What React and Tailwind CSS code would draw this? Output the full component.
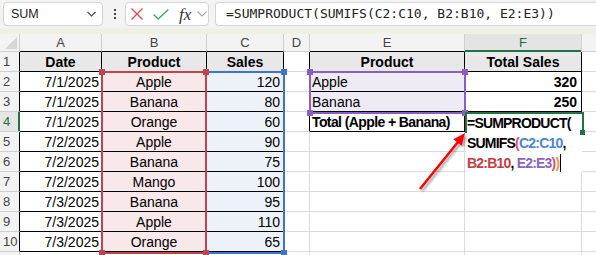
import React from 'react';

const data = [
  ['7/1/2025', 'Apple', 120],
  ['7/1/2025', 'Banana', 80],
  ['7/1/2025', 'Orange', 60],
  ['7/2/2025', 'Apple', 90],
  ['7/2/2025', 'Banana', 75],
  ['7/2/2025', 'Mango', 100],
  ['7/3/2025', 'Banana', 95],
  ['7/3/2025', 'Apple', 110],
  ['7/3/2025', 'Orange', 65],
];

const GRAY = 'border-[#dadada]';

function Cell({ className = '', children }) {
  return (
    <div className={`flex items-center overflow-hidden whitespace-nowrap border-r border-b text-[14px] text-black pt-[2px] ${className}`}>
      {children}
    </div>
  );
}

function FormulaBar() {
  return (
    <div>
      <div className="h-[28px] bg-[#f3f3f3] flex items-start pt-[2px]">
        <div className="ml-[3px] w-[100px] h-[24px] rounded-[4px] border border-[#d4d4d4] bg-white flex items-center justify-between pl-[7px] pr-[6px]">
          <span className="text-[12.5px] text-[#222]">SUM</span>
          <svg width="9" height="6" viewBox="0 0 9 6">
            <polyline points="0.5,0.8 4.5,4.8 8.5,0.8" fill="none" stroke="#444" strokeWidth="1.2" />
          </svg>
        </div>
        <div className="ml-[10px] w-[3px] h-[24px] flex flex-col items-center justify-center gap-[2px]">
          <span className="w-[2px] h-[2px] bg-[#444]" />
          <span className="w-[2px] h-[2px] bg-[#444]" />
          <span className="w-[2px] h-[2px] bg-[#444]" />
        </div>
        <div className="ml-[9px] w-[84px] h-[24px] rounded-[4px] border border-[#d4d4d4] bg-white flex items-center">
          <svg className="ml-[5px]" width="12" height="12" viewBox="0 0 12 12">
            <path d="M0.5 0.5L11.5 11.5M11.5 0.5L0.5 11.5" stroke="#e2474a" strokeWidth="1.3" />
          </svg>
          <svg className="ml-[10px]" width="16" height="11" viewBox="0 0 16 11">
            <polyline points="0.6,5.4 5.2,10 15.4,0.6" fill="none" stroke="#46a862" strokeWidth="1.4" />
          </svg>
          <span className="ml-[10px] font-['Liberation_Serif',serif] italic text-[17px] leading-none text-[#333]">fx</span>
          <svg className="ml-[6px]" width="10" height="6" viewBox="0 0 10 6">
            <polyline points="0.5,0.6 5,5 9.5,0.6" fill="none" stroke="#a0a0a0" strokeWidth="1.1" />
          </svg>
        </div>
        <div className="ml-[6px] flex-1 h-[24px] rounded-l-[4px] border border-r-0 border-[#d4d4d4] bg-white flex items-center pl-[10px]">
          <span className="font-['DejaVu_Sans_Mono',monospace] text-[13px] text-[#222] whitespace-nowrap">
            =SUMPRODUCT(SUMIFS(C2:C10, B2:B10, E2:E3))
          </span>
        </div>
      </div>
      <div className="h-[6px] bg-[#eef1e3]" />
    </div>
  );
}

function HeaderRow() {
  return (
    <>
      <div className="bg-[#f3f3f3] border-r border-b border-[#cfcfcf]">
        <svg width="20" height="18" viewBox="0 0 20 18">
          <polygon points="17,3 17,15 5,15" fill="#d6d6d6" />
        </svg>
      </div>
      <div className="bg-[#f3f3f3] border-r border-b border-r-[#cfcfcf] border-b-black flex items-center justify-center text-[13px] text-[#444]">A</div>
      <div className="bg-[#f3f3f3] border-r border-b border-r-[#cfcfcf] border-b-black flex items-center justify-center text-[13px] text-[#444]">B</div>
      <div className="bg-[#f3f3f3] border-r border-b border-r-[#cfcfcf] border-b-black flex items-center justify-center text-[13px] text-[#444]">C</div>
      <div className="bg-[#f3f3f3] border-r border-b border-[#cfcfcf] flex items-center justify-center text-[13px] text-[#444]">D</div>
      <div className="bg-[#f3f3f3] border-r border-b border-r-[#cfcfcf] border-b-black flex items-center justify-center text-[13px] text-[#444]">E</div>
      <div className="bg-[#e4e4e4] border-r border-[#cfcfcf] shadow-[inset_0_-2px_0_#217346] flex items-center justify-center text-[13px] text-[#1f6b3f]">F</div>
      <div className="bg-[#f3f3f3] border-b border-[#cfcfcf]" />
    </>
  );
}

function Row({ n }) {
  const d = n >= 2 && n <= 10 ? data[n - 2] : null;
  const rowHead = n === 4
    ? 'bg-[#e6e6e6] text-[#217346] border-b border-[#cfcfcf] shadow-[inset_-2px_0_0_#217346]'
    : n <= 10
      ? 'bg-[#f3f3f3] text-[#444] border-r border-b border-r-black border-b-[#cfcfcf]'
      : 'bg-[#f3f3f3] text-[#444] border-r border-b border-[#cfcfcf]';

  return (
    <>
      <div className={`flex items-center pl-[3px] text-[13px] ${rowHead}`}>{n <= 10 ? n : ''}</div>

      {n === 1 && <Cell className="justify-center font-bold bg-[#e8e8e8] border-black">Date</Cell>}
      {d && <Cell className="justify-end pr-[2px] border-black">{d[0]}</Cell>}
      {n === 11 && <Cell className={GRAY} />}

      {n === 1 && <Cell className="justify-center font-bold bg-[#e8e8e8] border-black">Product</Cell>}
      {d && <Cell className="justify-center bg-[#f9e8e9] border-black">{d[1]}</Cell>}
      {n === 11 && <Cell className={GRAY} />}

      {n === 1 && <Cell className="justify-center font-bold bg-[#e8e8e8] border-black">Sales</Cell>}
      {d && <Cell className="justify-end pr-[3px] bg-[#edf1f9] border-black">{d[2]}</Cell>}
      {n === 11 && <Cell className={GRAY} />}

      {n <= 4 ? <Cell className="border-r-black border-b-[#dadada]" /> : <Cell className={GRAY} />}

      {n === 1 && <Cell className="justify-center font-bold bg-[#e8e8e8] border-black">Product</Cell>}
      {n === 2 && <Cell className="pl-[2px] bg-[#efebf6] border-black">Apple</Cell>}
      {n === 3 && <Cell className="pl-[2px] bg-[#efebf6] border-black">Banana</Cell>}
      {n === 4 && <Cell className="pl-[2px] font-bold tracking-[-0.6px] border-black">Total (Apple + Banana)</Cell>}
      {n >= 5 && <Cell className={GRAY} />}

      {n === 1 && <Cell className="justify-center font-bold bg-[#e8e8e8] border-black">Total Sales</Cell>}
      {n === 2 && <Cell className="justify-end pr-[4px] font-bold border-black">320</Cell>}
      {n === 3 && <Cell className="justify-end pr-[4px] font-bold border-black">250</Cell>}
      {n === 4 && <Cell className="border-black" />}
      {n >= 5 && <Cell className={GRAY} />}

      <div className={`border-b ${GRAY}`} />
    </>
  );
}

function Handle({ className }) {
  return <span className={`absolute w-[6px] h-[6px] ${className}`} />;
}

export default function App() {
  return (
    <div className="relative w-[596px] h-[255px] overflow-hidden bg-white font-['Liberation_Sans',Arial,sans-serif]">
      <FormulaBar />

      <div className="grid grid-cols-[20px_82px_105px_77px_26px_155px_117px_1fr] grid-rows-[18px_repeat(11,20px)]">
        <HeaderRow />
        {[1, 2, 3, 4, 5, 6, 7, 8, 9, 10, 11].map(n => <Row key={n} n={n} />)}
      </div>

      {/* range highlights */}
      <div className="absolute left-[205px] top-[71px] w-[80px] h-[183px] border-2 border-[#3d74cf]">
        <Handle className="-right-[4px] -top-[4px] bg-[#3d74cf]" />
        <Handle className="-right-[4px] -bottom-[4px] bg-[#3d74cf]" />
      </div>
      <div className="absolute left-[101px] top-[71px] w-[106px] h-[183px] border-2 border-[#c3424b]">
        <Handle className="-left-[4px] -top-[4px] bg-[#c3424b]" />
        <Handle className="-right-[4px] -top-[4px] bg-[#c3424b]" />
        <Handle className="-left-[4px] -bottom-[4px] bg-[#c3424b]" />
        <Handle className="-right-[4px] -bottom-[4px] bg-[#c3424b]" />
      </div>
      <div className="absolute left-[309px] top-[71px] w-[157px] h-[43px] border-2 border-[#8a5fc2]">
        <Handle className="-left-[4px] -top-[4px] bg-[#8a5fc2]" />
        <Handle className="-right-[4px] -top-[4px] bg-[#8a5fc2]" />
        <Handle className="-left-[4px] -bottom-[4px] bg-[#8a5fc2]" />
        <Handle className="-right-[4px] -bottom-[4px] bg-[#8a5fc2]" />
      </div>

      {/* in-cell editor for F4 */}
      <div className="absolute left-[466px] top-[113px] w-[116px] h-[59px] bg-white" />
      <div className="absolute left-[465px] top-[112px] w-[119px] h-[21px] border-2 border-b-0 border-[#217346]" />
      <span className="absolute left-[580px] top-[130px] w-[5px] h-[5px] bg-[#217346]" />
      <div className="absolute left-[467px] top-[113px] flex flex-col text-[14px] leading-[20px] font-bold tracking-[-0.8px] text-black whitespace-nowrap">
        <span>=SUMPRODUCT(</span>
        <span>
          SUMIFS<span className="text-[#e0506e]">(</span>
          <span className="text-[#4a86d8]">C2:C10</span>,
        </span>
        <span className="flex items-center">
          <span className="text-[#c43c44]">B2:B10</span>,&nbsp;
          <span className="text-[#8d62c4]">E2:E3</span>
          <span className="text-[#e0506e]">)</span>
          <span className="text-[#e8973c]">)</span>
          <span className="ml-[1px] w-[1px] h-[18px] bg-black" />
        </span>
      </div>

      {/* callout arrow */}
      <svg className="absolute left-0 top-0 pointer-events-none" width="596" height="255" viewBox="0 0 596 255">
        <defs>
          <filter id="sh" x="-20%" y="-20%" width="140%" height="140%">
            <feDropShadow dx="2" dy="2" stdDeviation="1.2" floodColor="#000" floodOpacity="0.35" />
          </filter>
        </defs>
        <g filter="url(#sh)">
          <line x1="420" y1="189" x2="458" y2="142" stroke="#ff0000" strokeWidth="2.5" />
          <polygon points="465,133 461.6,145.8 453.4,139.2" fill="#ff0000" />
        </g>
      </svg>
    </div>
  );
}
